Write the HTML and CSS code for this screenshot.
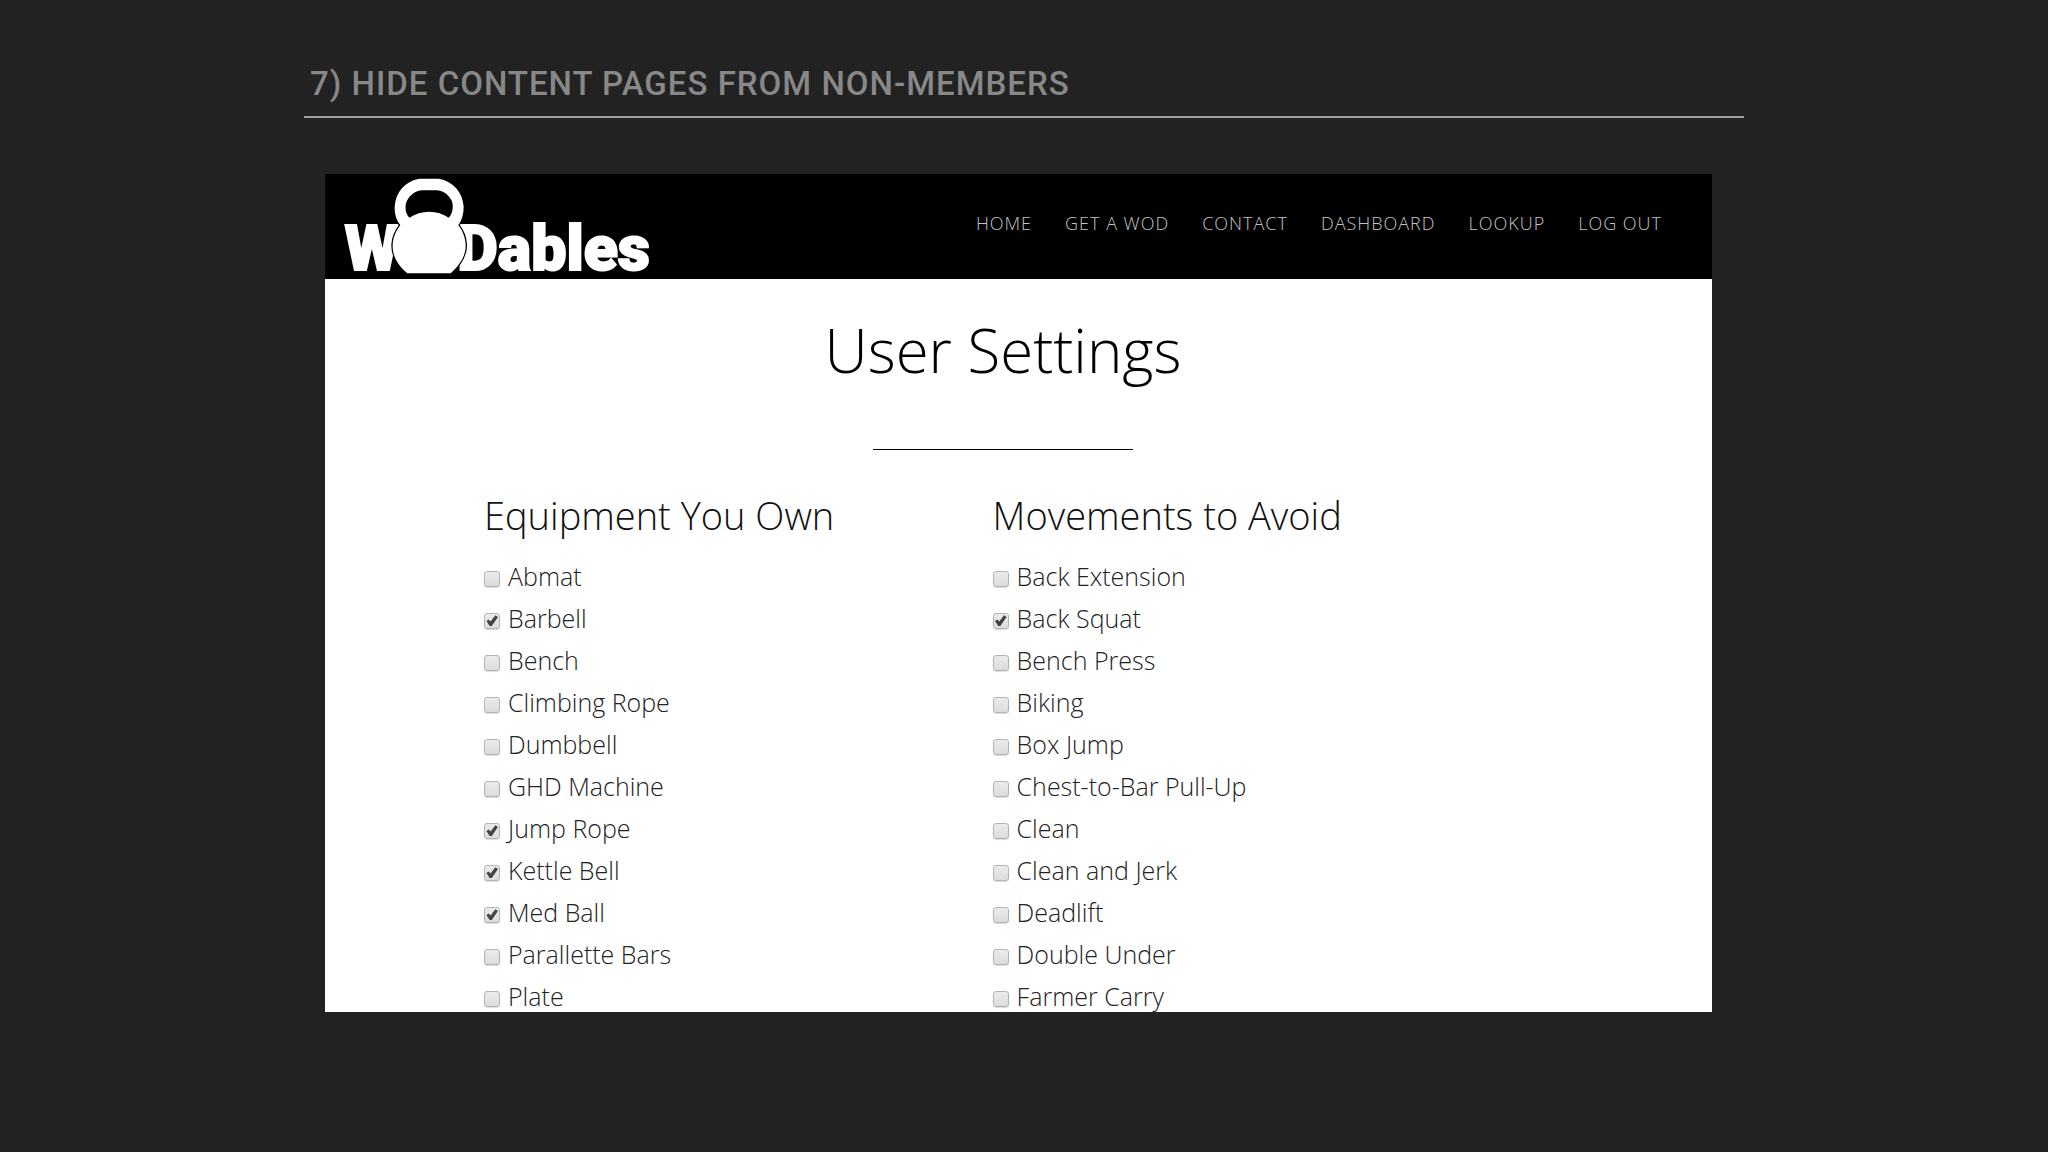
FILE: index.html
```html
<!DOCTYPE html>
<html lang="en">
<head>
<meta charset="utf-8">
<meta name="viewport" content="width=device-width, initial-scale=1">
<title>Hide content pages from non-members</title>
<link rel="stylesheet" href="styles.css">
</head>
<body>
<main class="slide">
  <h1 class="slide-title">7) Hide content pages from non-members</h1>
  <section class="panel">
    <header class="site-header">
      <a class="logo" href="#" aria-label="WODables">
        <svg class="logo-art" viewBox="72 40 924 288">
          <text class="logo-text" x="74" y="317">W</text>
          <text class="logo-text" x="412" y="317">Dables</text>
          <path class="bell" fill-rule="evenodd" d="M262 326C232 300 217 274 218 240C219 218 228 198 241 182C229 166 223 148 224 126C227 82 254 50 298 42H356C400 50 428 82 431 126C431 148 426 166 415 182C428 198 436 218 437 240C438 274 420 300 392 326ZM268 159C302 135 354 135 386 159C400 146 402 116 392 103C382 88 368 77 350 77H306C290 77 274 88 264 103C253 118 254 146 268 159Z"/>
        </svg>
      </a>
      <nav class="nav">
        <a href="#">Home</a>
        <a href="#">Get a WOD</a>
        <a href="#">Contact</a>
        <a href="#">Dashboard</a>
        <a href="#">Lookup</a>
        <a href="#">Log Out</a>
      </nav>
    </header>
    <form class="settings">
      <h2 class="page-title">User Settings</h2>
      <hr class="divider">
      <div class="columns">
        <fieldset class="group">
          <legend>Equipment You Own</legend>
          <label><input type="checkbox">Abmat</label>
          <label><input type="checkbox" checked>Barbell</label>
          <label><input type="checkbox">Bench</label>
          <label><input type="checkbox">Climbing Rope</label>
          <label><input type="checkbox">Dumbbell</label>
          <label><input type="checkbox">GHD Machine</label>
          <label><input type="checkbox" checked>Jump Rope</label>
          <label><input type="checkbox" checked>Kettle Bell</label>
          <label><input type="checkbox" checked>Med Ball</label>
          <label><input type="checkbox">Parallette Bars</label>
          <label><input type="checkbox">Plate</label>
        </fieldset>
        <fieldset class="group">
          <legend>Movements to Avoid</legend>
          <label><input type="checkbox">Back Extension</label>
          <label><input type="checkbox" checked>Back Squat</label>
          <label><input type="checkbox">Bench Press</label>
          <label><input type="checkbox">Biking</label>
          <label><input type="checkbox">Box Jump</label>
          <label><input type="checkbox">Chest-to-Bar Pull-Up</label>
          <label><input type="checkbox">Clean</label>
          <label><input type="checkbox">Clean and Jerk</label>
          <label><input type="checkbox">Deadlift</label>
          <label><input type="checkbox">Double Under</label>
          <label><input type="checkbox">Farmer Carry</label>
        </fieldset>
      </div>
    </form>
  </section>
</main>
</body>
</html>
```
FILE: styles.css
```css
* { box-sizing: border-box; }

body {
  margin: 0;
  background: #222;
  color: #222;
  font-family: "Open Sans", "Noto Sans", sans-serif;
  font-weight: 300;
}

.slide {
  width: 1440px;
  max-width: 92%;
  margin: 0 auto;
  padding-top: 63px;
}

.slide-title {
  margin: 0;
  padding: 0 6px 12px;
  border-bottom: 2px solid #a0a0a0;
  color: #888;
  font-family: Roboto, sans-serif;
  font-size: 33px;
  font-weight: 500;
  line-height: 41px;
  letter-spacing: 1px;
  text-transform: uppercase;
}

.panel {
  margin: 56px 32px 0 21px;
  aspect-ratio: 1387 / 838;
  overflow: hidden;
  background: #fff;
}

.site-header {
  display: flex;
  justify-content: space-between;
  align-items: flex-start;
  height: 105px;
  padding: 4px 50px 0 19px;
  background: #000;
}

.logo-art {
  display: block;
  width: 308px;
  height: 96px;
  overflow: visible;
}

.logo-text {
  fill: #fff;
  stroke: #fff;
  stroke-width: 6px;
  font-family: Roboto, sans-serif;
  font-size: 188px;
  font-weight: 900;
}

.bell {
  fill: #fff;
  stroke: #000;
  stroke-width: 8px;
  paint-order: stroke;
}

.nav {
  display: flex;
  gap: 33px;
  padding-top: 32px;
}

.nav a {
  color: #c4c4c4;
  font-size: 18px;
  line-height: 26px;
  letter-spacing: 1px;
  text-decoration: none;
  text-transform: uppercase;
}

.settings { padding: 30px 190px 0 159px; }

.page-title {
  margin: 0;
  color: #000;
  font-size: 60px;
  font-weight: 300;
  line-height: 82px;
  text-align: center;
}

.divider {
  width: 260px;
  height: 1px;
  margin: 58px auto 39px;
  border: 0;
  background: #000;
}

.columns {
  display: grid;
  grid-template-columns: 49% 1fr;
}

.group {
  margin: 0;
  padding: 0;
  border: 0;
}

.group legend {
  padding: 0;
  margin-bottom: 14px;
  color: #111;
  font-size: 38px;
  line-height: 52px;
}

.group label {
  display: flex;
  align-items: center;
  gap: 8px;
  font-size: 25px;
  line-height: 42px;
}

.group input {
  appearance: none;
  display: grid;
  place-items: center;
  width: 16px;
  height: 16px;
  margin: 5px 0 0;
  border: 1px solid #b4b4b4;
  border-radius: 3px;
  background: linear-gradient(#ebebeb, #dcdcdc);
  box-shadow: 0 1px 1px #ddd;
}

.group input:checked::before {
  content: "";
  width: 12px;
  height: 11px;
  background: #444;
  clip-path: polygon(4% 54%, 22% 40%, 38% 58%, 78% 2%, 100% 18%, 48% 100%, 30% 100%);
}
```
